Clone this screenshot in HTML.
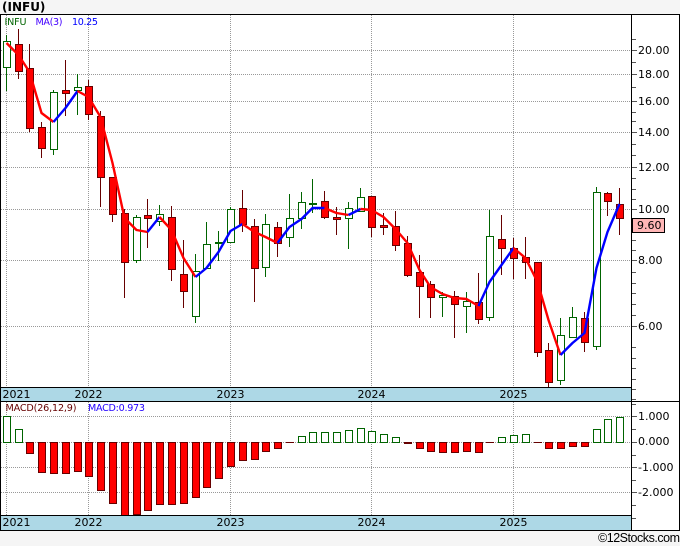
<!DOCTYPE html>
<html><head><meta charset="utf-8"><title>INFU</title>
<style>
html,body{margin:0;padding:0;background:#f5f5f5}
svg{display:block}
text{font-family:"DejaVu Sans","Liberation Sans",sans-serif;font-size:11px;fill:#000}
.g{fill:#fff;stroke:#006400}
.r{fill:#f00;stroke:#660000}
.grid{stroke:#999;stroke-width:1;stroke-dasharray:1 1;fill:none}
.crisp{shape-rendering:crispEdges}
.ma{fill:none;stroke-width:2.4;stroke-linejoin:round}
</style></head><body>
<svg width="680" height="546" viewBox="0 0 680 546" xmlns="http://www.w3.org/2000/svg">
<rect width="680" height="546" fill="#f5f5f5"/>
<rect x="0" y="14" width="680" height="517" fill="#fff"/>
<g class="crisp">
<path class="grid" d="M1 50.5H631M1 74.5H631M1 101.5H631M1 132.5H631M1 167.5H631M1 209.5H631M1 260.5H631M1 326.5H631M1 416.5H631M1 442.5H631M1 467.5H631M1 492.5H631"/>
<path class="grid" d="M6.5 15V387M88.5 15V387M230.5 15V387M371.5 15V387M513.5 15V387M6.5 402V515M88.5 402V515M230.5 402V515M371.5 402V515M513.5 402V515"/>
<path stroke="#006400" fill="none" d="M6.5 35V91M53.5 90V155M77.5 74V115M136.5 215V263M159.5 205V226M195.5 254V323M206.5 222V268M218.5 231V261M230.5 207V243M265.5 214V277M289.5 194V247M301.5 192V229M312.5 179V213M348.5 202V249M360.5 188V212M442.5 292V317M466.5 292V333M489.5 210V321M560.5 318V385M572.5 307V338M596.5 187V350"/>
<path stroke="#660000" fill="none" d="M18.5 29V79M29.5 44V132M41.5 122V158M65.5 60V116M88.5 80V120M100.5 111V207M112.5 177V222M124.5 209V298M147.5 199V248M171.5 206V281M183.5 240V308M242.5 190V232M254.5 219V302M277.5 222V257M324.5 191V219M336.5 207V235M371.5 197V237M383.5 213V235M395.5 211V251M407.5 236V277M419.5 255V318M430.5 281V318M454.5 291V338M478.5 273V324M501.5 215V275M513.5 238V279M525.5 237V279M537.5 262V357M548.5 343V387M584.5 312V352M607.5 192V216M619.5 188V235"/>
<rect class="g" x="3.5" y="41.5" width="7" height="26"/>
<rect class="r" x="15.5" y="44.5" width="7" height="27"/>
<rect class="r" x="26.5" y="68.5" width="7" height="60"/>
<rect class="r" x="38.5" y="127.5" width="7" height="21"/>
<rect class="g" x="50.5" y="92.5" width="7" height="57"/>
<rect class="r" x="62.5" y="90.5" width="7" height="3"/>
<rect class="g" x="74.5" y="87.5" width="7" height="3"/>
<rect class="r" x="85.5" y="86.5" width="7" height="28"/>
<rect class="r" x="97.5" y="116.5" width="7" height="61"/>
<rect class="r" x="109.5" y="177.5" width="7" height="37"/>
<rect class="r" x="121.5" y="213.5" width="7" height="49"/>
<rect class="g" x="133.5" y="217.5" width="7" height="43"/>
<rect class="r" x="144.5" y="215.5" width="7" height="3"/>
<rect class="g" x="156.5" y="214.5" width="7" height="7"/>
<rect class="r" x="168.5" y="217.5" width="7" height="52"/>
<rect class="r" x="180.5" y="274.5" width="7" height="17"/>
<rect class="g" x="192.5" y="271.5" width="7" height="45"/>
<rect class="g" x="203.5" y="244.5" width="7" height="24"/>
<rect class="g" x="215.5" y="242.5" width="7" height="1"/>
<rect class="g" x="227.5" y="209.5" width="7" height="33"/>
<rect class="r" x="239.5" y="208.5" width="7" height="16"/>
<rect class="r" x="251.5" y="226.5" width="7" height="42"/>
<rect class="g" x="262.5" y="224.5" width="7" height="43"/>
<rect class="r" x="274.5" y="227.5" width="7" height="16"/>
<rect class="g" x="286.5" y="218.5" width="7" height="19"/>
<rect class="g" x="298.5" y="202.5" width="7" height="16"/>
<rect x="309" y="203" width="8" height="2" fill="#006400"/>
<rect class="r" x="321.5" y="201.5" width="7" height="16"/>
<rect class="r" x="333.5" y="217.5" width="7" height="2"/>
<rect class="g" x="345.5" y="208.5" width="7" height="10"/>
<rect class="g" x="357.5" y="197.5" width="7" height="14"/>
<rect class="r" x="368.5" y="196.5" width="7" height="31"/>
<rect class="r" x="380.5" y="225.5" width="7" height="2"/>
<rect class="r" x="392.5" y="226.5" width="7" height="19"/>
<rect class="r" x="404.5" y="243.5" width="7" height="32"/>
<rect class="r" x="416.5" y="272.5" width="7" height="14"/>
<rect class="r" x="427.5" y="284.5" width="7" height="13"/>
<rect class="g" x="439.5" y="295.5" width="7" height="2"/>
<rect class="r" x="451.5" y="296.5" width="7" height="8"/>
<rect class="g" x="463.5" y="301.5" width="7" height="5"/>
<rect class="r" x="475.5" y="302.5" width="7" height="17"/>
<rect class="g" x="486.5" y="236.5" width="7" height="81"/>
<rect class="r" x="498.5" y="239.5" width="7" height="9"/>
<rect class="r" x="510.5" y="248.5" width="7" height="10"/>
<rect class="r" x="522.5" y="257.5" width="7" height="5"/>
<rect class="r" x="534.5" y="262.5" width="7" height="90"/>
<rect class="r" x="545.5" y="350.5" width="7" height="32"/>
<rect class="g" x="557.5" y="335.5" width="7" height="45"/>
<rect class="g" x="569.5" y="317.5" width="7" height="20"/>
<rect class="r" x="581.5" y="318.5" width="7" height="24"/>
<rect class="g" x="593.5" y="192.5" width="7" height="154"/>
<rect class="r" x="604.5" y="193.5" width="7" height="8"/>
<rect class="r" x="616.5" y="204.5" width="7" height="14"/>
</g>
<g class="ma">
<polyline stroke="#f00" points="6.5,43 18.5,55 29.5,72 41.5,113 53.5,122"/>
<polyline stroke="#00f" points="53.5,122 65.5,108 77.5,91"/>
<polyline stroke="#f00" points="77.5,91 88.5,97 100.5,117 112.5,163 124.5,218 136.5,230 147.5,232"/>
<polyline stroke="#00f" points="147.5,232 159.5,217"/>
<polyline stroke="#f00" points="159.5,217 171.5,230 183.5,258 195.5,277"/>
<polyline stroke="#00f" points="195.5,277 206.5,268 218.5,252 230.5,231 242.5,224"/>
<polyline stroke="#f00" points="242.5,224 254.5,232 265.5,237 277.5,243"/>
<polyline stroke="#00f" points="277.5,243 289.5,227 301.5,219 312.5,208 324.5,208"/>
<polyline stroke="#f00" points="324.5,208 336.5,213 348.5,215"/>
<polyline stroke="#00f" points="348.5,215 360.5,209"/>
<polyline stroke="#f00" points="360.5,209 371.5,210 383.5,217 395.5,229 407.5,243 419.5,270 430.5,287 442.5,294 454.5,298 466.5,299 478.5,306"/>
<polyline stroke="#00f" points="478.5,306 489.5,282 501.5,265 513.5,248"/>
<polyline stroke="#f00" points="513.5,248 525.5,258 537.5,282 548.5,320 560.5,355"/>
<polyline stroke="#00f" points="560.5,355 572.5,343 584.5,333 596.5,268 607.5,232 619.5,204"/>
</g>
<g class="crisp">
<rect class="g" x="3.5" y="416.5" width="7" height="26"/>
<rect class="g" x="15.5" y="429.5" width="7" height="13"/>
<rect class="r" x="26.5" y="442.5" width="7" height="11"/>
<rect class="r" x="38.5" y="442.5" width="7" height="30"/>
<rect class="r" x="50.5" y="442.5" width="7" height="31"/>
<rect class="r" x="62.5" y="442.5" width="7" height="31"/>
<rect class="r" x="74.5" y="442.5" width="7" height="29"/>
<rect class="r" x="85.5" y="442.5" width="7" height="34"/>
<rect class="r" x="97.5" y="442.5" width="7" height="48"/>
<rect class="r" x="109.5" y="442.5" width="7" height="61"/>
<rect class="r" x="121.5" y="442.5" width="7" height="73"/>
<rect class="r" x="133.5" y="442.5" width="7" height="72"/>
<rect class="r" x="144.5" y="442.5" width="7" height="68"/>
<rect class="r" x="156.5" y="442.5" width="7" height="62"/>
<rect class="r" x="168.5" y="442.5" width="7" height="62"/>
<rect class="r" x="180.5" y="442.5" width="7" height="61"/>
<rect class="r" x="192.5" y="442.5" width="7" height="55"/>
<rect class="r" x="203.5" y="442.5" width="7" height="45"/>
<rect class="r" x="215.5" y="442.5" width="7" height="36"/>
<rect class="r" x="227.5" y="442.5" width="7" height="24"/>
<rect class="r" x="239.5" y="442.5" width="7" height="18"/>
<rect class="r" x="251.5" y="442.5" width="7" height="17"/>
<rect class="r" x="262.5" y="442.5" width="7" height="9"/>
<rect class="r" x="274.5" y="442.5" width="7" height="6"/>
<path stroke="#660000" d="M286 442.5H294"/>
<rect class="g" x="298.5" y="436.5" width="7" height="6"/>
<rect class="g" x="309.5" y="432.5" width="7" height="10"/>
<rect class="g" x="321.5" y="432.5" width="7" height="10"/>
<rect class="g" x="333.5" y="432.5" width="7" height="10"/>
<rect class="g" x="345.5" y="430.5" width="7" height="12"/>
<rect class="g" x="357.5" y="428.5" width="7" height="14"/>
<rect class="g" x="368.5" y="431.5" width="7" height="11"/>
<rect class="g" x="380.5" y="434.5" width="7" height="8"/>
<rect class="g" x="392.5" y="437.5" width="7" height="5"/>
<rect fill="#660000" x="404" y="442" width="8" height="2"/>
<rect class="r" x="416.5" y="442.5" width="7" height="6"/>
<rect class="r" x="427.5" y="442.5" width="7" height="9"/>
<rect class="r" x="439.5" y="442.5" width="7" height="10"/>
<rect class="r" x="451.5" y="442.5" width="7" height="10"/>
<rect class="r" x="463.5" y="442.5" width="7" height="9"/>
<rect class="r" x="475.5" y="442.5" width="7" height="10"/>
<path stroke="#660000" d="M486 442.5H494"/>
<rect class="g" x="498.5" y="437.5" width="7" height="5"/>
<rect class="g" x="510.5" y="435.5" width="7" height="7"/>
<rect class="g" x="522.5" y="434.5" width="7" height="8"/>
<path stroke="#660000" d="M534 442.5H542"/>
<rect class="r" x="545.5" y="442.5" width="7" height="6"/>
<rect class="r" x="557.5" y="442.5" width="7" height="6"/>
<rect class="r" x="569.5" y="442.5" width="7" height="4"/>
<rect class="r" x="581.5" y="442.5" width="7" height="4"/>
<rect class="g" x="593.5" y="429.5" width="7" height="13"/>
<rect class="g" x="604.5" y="419.5" width="7" height="23"/>
<rect class="g" x="616.5" y="417.5" width="7" height="25"/>
<rect x="0" y="387" width="631" height="14" fill="#add8e6"/>
<rect x="0" y="515" width="631" height="15" fill="#add8e6"/>
<path stroke="#000" fill="none" d="M0 14.5H680M0 387.5H631M0 401.5H680M0 515.5H631M0 530.5H680M0.5 14V531M631.5 14V531M679.5 14V531"/>
<path stroke="#555" fill="none" d="M632 39.5H636M632 62.5H636M632 87.5H636M632 112.5H636M632 121.5H636M632 144.5H636M632 155.5H636M632 178.5H636M632 189.5H636M632 199.5H636M632 240.5H636M632 250.5H636M632 272.5H636M632 283.5H636M632 293.5H636M632 304.5H636M632 315.5H636M632 347.5H636M632 358.5H636M632 368.5H636M632 379.5H636M632 389.5H636M632 399.5H636M632 404.5H636M632 429.5H636M632 455.5H636M632 480.5H636M632 505.5H636M632 518.5H636M632 50.5H637M632 74.5H637M632 101.5H637M632 132.5H637M632 167.5H637M632 209.5H637M632 260.5H637M632 326.5H637M632 416.5H637M632 442.5H637M632 467.5H637M632 492.5H637"/>
<rect x="632.5" y="218.5" width="32" height="14" fill="#ffb6b6" stroke="#000"/>
</g>
<text x="2" y="11" style="font-weight:bold;font-size:12px">(INFU)</text>
<text x="4.5" y="25" style="font-size:9.6px;fill:#006400" textLength="22">INFU</text>
<text x="35.5" y="25" style="font-size:9.6px;fill:#4400ff" textLength="27">MA(3)</text>
<text x="72" y="25" style="font-size:9.6px;fill:#0000ff" textLength="26">10.25</text>
<text x="5.5" y="411" style="font-size:9.6px;fill:#660000" textLength="71">MACD(26,12,9)</text>
<text x="88" y="411" style="font-size:9.6px;fill:#2200ff" textLength="57">MACD:0.973</text>
<text x="638" y="54">20.00</text>
<text x="638" y="78">18.00</text>
<text x="638" y="105">16.00</text>
<text x="638" y="136">14.00</text>
<text x="638" y="171">12.00</text>
<text x="638" y="213">10.00</text>
<text x="638" y="264">8.00</text>
<text x="638" y="330">6.00</text>
<text x="637" y="229">9.60</text>
<text x="638" y="420">1.000</text>
<text x="638" y="445">0.000</text>
<text x="638" y="471">-1.000</text>
<text x="638" y="496">-2.000</text>
<text x="2.5" y="398">2021</text>
<text x="74.5" y="398">2022</text>
<text x="216.5" y="398">2023</text>
<text x="357.5" y="398">2024</text>
<text x="499.5" y="398">2025</text>
<text x="2.5" y="526">2021</text>
<text x="74.5" y="526">2022</text>
<text x="216.5" y="526">2023</text>
<text x="357.5" y="526">2024</text>
<text x="499.5" y="526">2025</text>
<text x="598" y="542" style="font-family:'Liberation Sans',sans-serif;font-size:12.5px" textLength="82">©12Stocks.com</text>
</svg>
</body></html>
